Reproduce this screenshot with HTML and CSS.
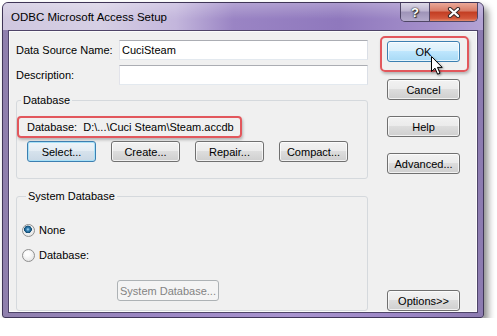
FILE: index.html
```html
<!DOCTYPE html>
<html lang="en">
<head>
  <meta charset="UTF-8">
  <title>ODBC Microsoft Access Setup</title>
  <link rel="stylesheet" href="styles.css">
</head>
<body>
  <div class="window">
    <div class="titlebar">
      <span class="title">ODBC Microsoft Access Setup</span>
      <div class="caption">
        <span class="cap cap-help">?</span>
        <span class="cap cap-close">
          <svg width="14" height="11" viewBox="0 0 14 11">
            <path d="M3 2 L11 9 M11 2 L3 9" stroke="#3a2a2a" stroke-width="4.2" stroke-linecap="round"/>
            <path d="M3 2 L11 9 M11 2 L3 9" stroke="#fff" stroke-width="2.2" stroke-linecap="round"/>
          </svg>
        </span>
      </div>
    </div>

    <div class="frame-body">
      <div class="client">
        <div class="main">
          <div class="field-row">
            <label for="dsn">Data Source Name:</label>
            <input type="text" id="dsn" value="CuciSteam">
          </div>
          <div class="field-row">
            <label for="desc">Description:</label>
            <input type="text" id="desc">
          </div>

          <fieldset class="group">
            <legend>Database</legend>
            <span class="callout db-path">Database:&nbsp; D:\...\Cuci Steam\Steam.accdb</span>
            <div class="db-buttons">
              <button type="button" class="btn focus">Select...</button>
              <button type="button" class="btn">Create...</button>
              <button type="button" class="btn">Repair...</button>
              <button type="button" class="btn">Compact...</button>
            </div>
          </fieldset>

          <fieldset class="group sysdb">
            <legend>System Database</legend>
            <label class="radio-row first"><input type="radio" name="sys" checked> None</label>
            <label class="radio-row"><input type="radio" name="sys"> Database:</label>
            <button type="button" class="btn sys-btn" disabled>System Database...</button>
          </fieldset>
        </div>

        <div class="side">
          <div class="ok-wrap">
            <button type="button" class="btn hot">OK</button>
            <svg class="cursor" width="13" height="20" viewBox="0 0 13 20">
              <path d="M0.5 0.5 L0.5 15.5 L4 12.2 L6.6 18.2 L9 17.2 L6.5 11.4 L11.2 11.4 Z" fill="#fff" stroke="#000" stroke-width="1" stroke-linejoin="round"/>
            </svg>
          </div>
          <button type="button" class="btn cancel">Cancel</button>
          <button type="button" class="btn help">Help</button>
          <button type="button" class="btn advanced">Advanced...</button>
          <button type="button" class="btn options">Options&gt;&gt;</button>
        </div>
      </div>
    </div>
  </div>
</body>
</html>
```

FILE: styles.css
```css
* {
  box-sizing: border-box;
}

body {
  margin: 0;
  background-color: #fff;
  font-family: "Liberation Sans", Arial, sans-serif;
  font-size: 11px;
  color: #000;
}

.window {
  width: 482px;
  height: 316px;
  margin: 2px 0 0 2px;
  border: 1px solid #3f3557;
  border-radius: 6px 6px 3px 3px;
  background: linear-gradient(to right, #8f80ad, #9a86c3 30%, #a894cf 60%, #9a85c4 85%, #8c7bb0);
  box-shadow: 4px 5px 7px rgba(0,0,0,0.45);
  display: flex;
  flex-direction: column;
}

.titlebar {
  height: 27px;
  display: flex;
  align-items: center;
  padding: 0 5px 0 8px;
  border-radius: 5px 5px 0 0;
  background:
    linear-gradient(rgba(255,255,255,0.25), rgba(255,255,255,0) 60%),
    linear-gradient(to right, #cfc7df, #d6cfe4 20%, #c3b6dc 36%, #9a84c4 48%, #8f78bd 70%, #a590cb 90%, #b3a3d4);
}

.title {
  font-size: 11.5px;
  padding-top: 1px;
}

.caption {
  display: flex;
  align-self: flex-start;
  margin-left: auto;
  border: 1px solid #4f4666;
  border-top: none;
  border-radius: 0 0 5px 5px;
  overflow: hidden;
}

.cap {
  height: 18px;
  display: flex;
  align-items: center;
  justify-content: center;
}

.cap-help {
  width: 29px;
  border-right: 1px solid #4f4666;
  background: linear-gradient(#dcd8e6, #bdb4d0 45%, #9e93b8 50%, #b4aacb);
  color: #fff;
  font-weight: bold;
  font-size: 13px;
  text-shadow: 0 0 1px #222, 0 0 2px #333, 1px 1px 1px #333;
}

.cap-close {
  width: 47px;
  background: linear-gradient(#eaa898, #d77a65 45%, #c23d22 50%, #d2563a 85%, #e48d6e);
}

.frame-body {
  flex: 1;
  display: flex;
  padding: 0 5px 4px;
}

.client {
  flex: 1;
  display: flex;
  padding: 9px 17px 1px 7px;
  border: 1px solid #4e4468;
  background-color: #f0f0f0;
  box-shadow: inset 0 0 0 1px #fbfbfb;
}

/* left column */

.main {
  width: 352px;
  display: flex;
  flex-direction: column;
}

.field-row {
  display: flex;
  align-items: center;
  height: 20px;
  margin-bottom: 5px;
}

.field-row label {
  width: 103px;
}

.field-row input {
  width: 249px;
  height: 20px;
  padding: 0 2px;
  border: 1px solid #abadb3;
  border-left-color: #e2e3ea;
  border-right-color: #dbdfe6;
  border-bottom-color: #e3e9ef;
  background-color: #fff;
  font: inherit;
  color: #000;
}

.group {
  margin: 4px 0 0;
  padding: 0 0 16px;
  min-inline-size: 0;
  border: 1px solid #d5d9dd;
  border-radius: 3px;
}

.group legend {
  margin-left: 4px;
  padding: 0 2px;
  line-height: 13px;
}

.callout {
  border: 2px solid #e2575c;
  border-radius: 4px;
  box-shadow: 1px 2px 3px rgba(0,0,0,0.25);
}

.db-path {
  display: inline-block;
  margin-top: 9px;
  padding: 0 6px 0 8px;
  line-height: 18px;
}

.db-buttons {
  display: flex;
  gap: 15px;
  margin-top: 3px;
  padding-left: 10px;
}

.db-buttons .btn {
  width: 69px;
}

.sysdb {
  flex: 1;
  margin-top: 11px;
  padding: 0 0 0 5px;
  display: flex;
  flex-direction: column;
  align-items: flex-start;
}

.radio-row {
  display: flex;
  align-items: center;
  gap: 4px;
  height: 16px;
  margin-top: 9px;
}

.radio-row.first {
  margin-top: 19px;
}

.radio-row input {
  appearance: none;
  -webkit-appearance: none;
  width: 13px;
  height: 13px;
  margin: 0;
  border: 1px solid #8f8f8f;
  border-radius: 50%;
  background: radial-gradient(circle at 40% 35%, #fdfdfd 20%, #dcdcdc 100%);
}

.radio-row input:checked {
  background:
    radial-gradient(circle at 45% 40%, #b7e2fa 0, #3784b8 1.6px, #10496f 3.6px, rgba(16,73,111,0) 4.1px),
    radial-gradient(circle at 40% 35%, #fdfdfd 20%, #dcdcdc 100%);
}

.sys-btn {
  width: 102px;
  height: 20px;
  margin: 17px 0 0 95px;
}

/* buttons */

.btn {
  height: 21px;
  padding: 0;
  border: 1px solid #707070;
  border-radius: 3px;
  background: linear-gradient(#f2f2f2, #ebebeb 48%, #dddddd 50%, #cfcfcf);
  box-shadow: inset 0 0 0 1px rgba(255,255,255,0.7);
  font: inherit;
  color: #000;
}

.btn.focus {
  border-color: #3c7fb1;
  background: linear-gradient(#eef4f9, #e3ecf3 48%, #d6e2ec 50%, #c9d8e5);
  box-shadow: inset 0 0 0 1px #a9e1f7;
}

.btn.hot {
  border-color: #3c7fb1;
  background: linear-gradient(#eaf6fd, #d9f0fc 48%, #bee6fd 50%, #a7d9f5);
}

.btn:disabled {
  border-color: #adb2b5;
  background: #f4f4f4;
  box-shadow: none;
  color: #838383;
}

/* right column */

.side {
  width: 73px;
  margin-left: 19px;
  display: flex;
  flex-direction: column;
}

.side .btn {
  width: 73px;
}

.ok-wrap {
  position: relative;
  margin-top: 1px;
  height: 21px;
}

.ok-wrap::before {
  content: "";
  position: absolute;
  inset: -5px -9px -10px -7px;
  border: 2px solid #e2575c;
  border-radius: 5px;
  box-shadow: 1px 2px 3px rgba(0,0,0,0.25);
  pointer-events: none;
}

.cursor {
  position: absolute;
  left: 44px;
  top: 15px;
  filter: drop-shadow(1px 1px 1px rgba(0,0,0,0.4));
}

.cancel {
  margin-top: 17px;
}

.help,
.advanced {
  margin-top: 16px;
}

.options {
  margin-top: auto;
}
```
